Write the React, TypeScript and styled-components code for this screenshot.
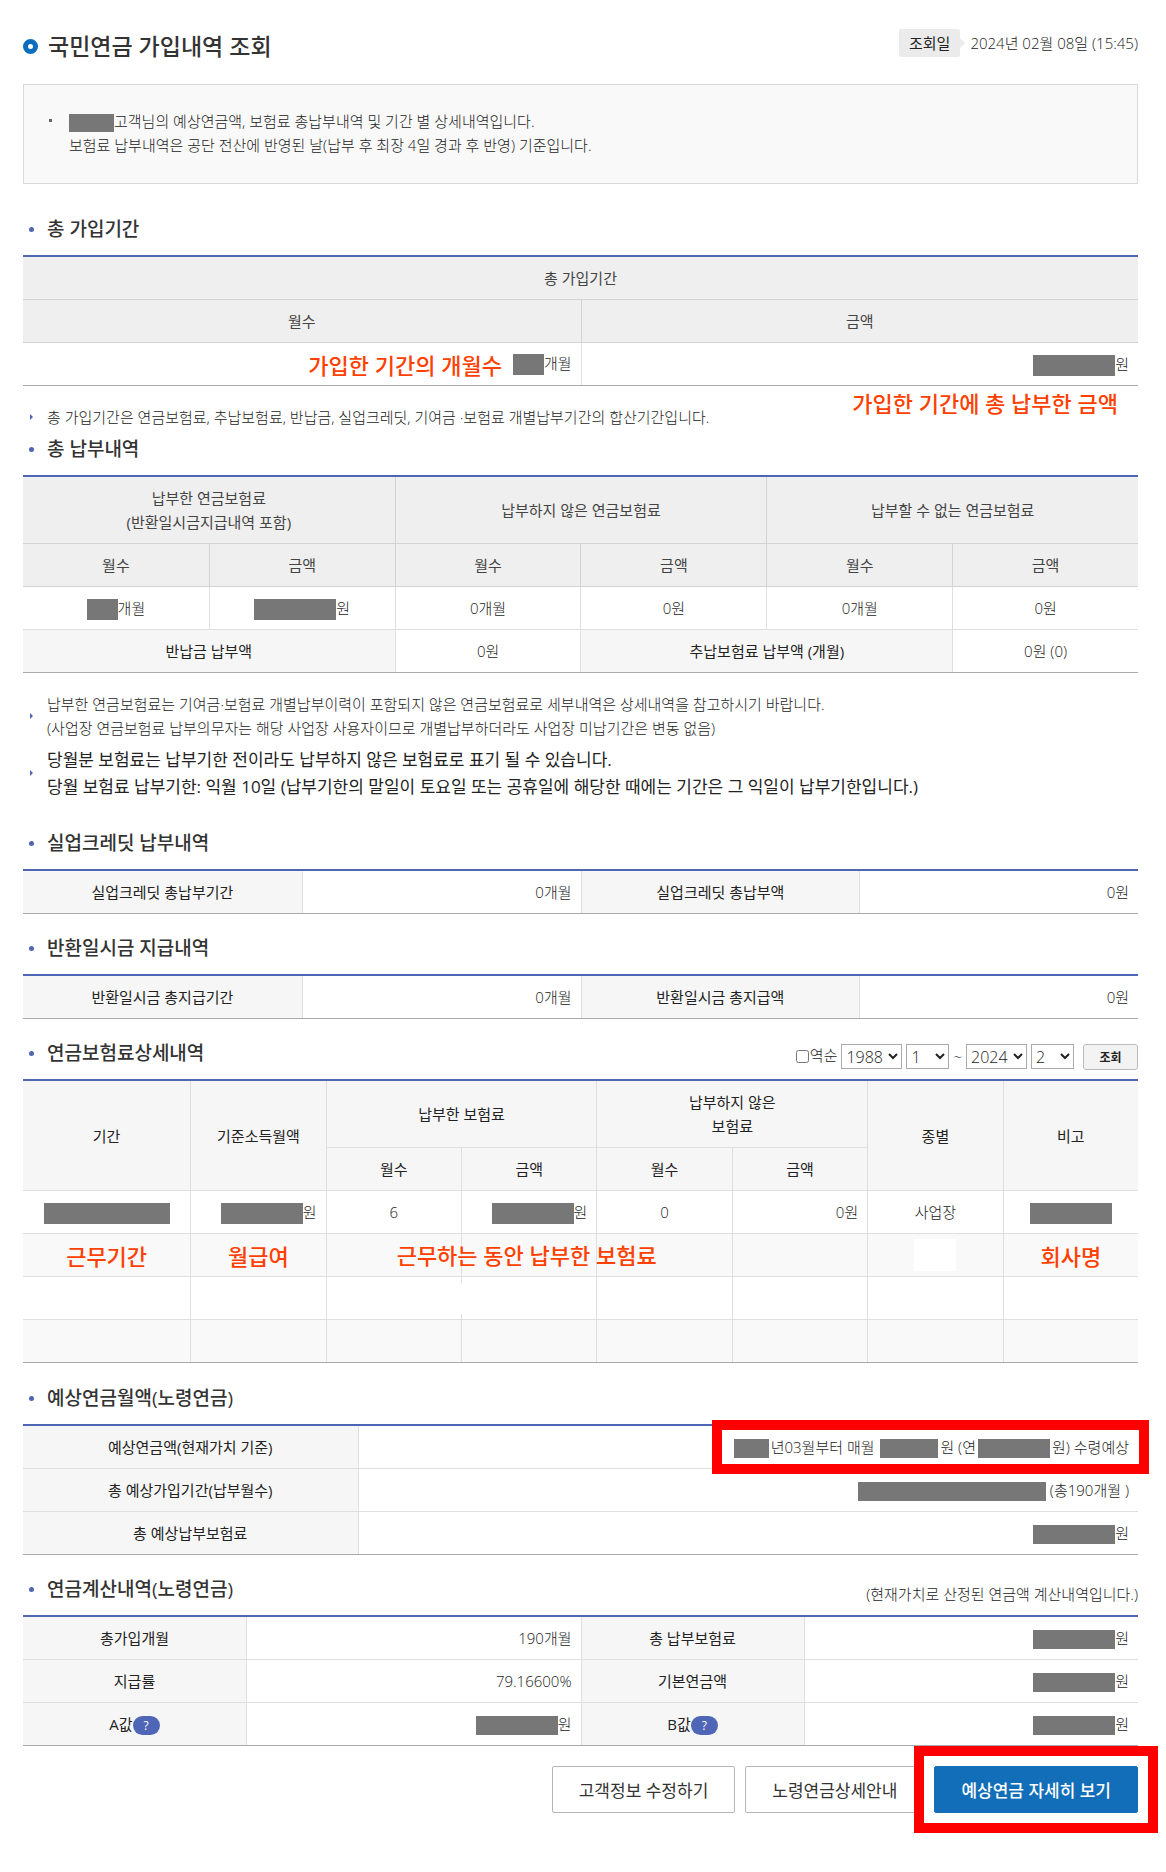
import React from 'react';
import styled, { createGlobalStyle, css } from 'styled-components';

const BLUE = '#4f65b5';

const GlobalStyle = createGlobalStyle`
  *, *::before, *::after { box-sizing: border-box; }
  body {
    margin: 0;
    background: #fff;
    color: #222;
    font-family: "Open Sans", "Noto Sans CJK KR", sans-serif;
    font-size: 15px;
    font-weight: 300;
    line-height: 24px;
    word-break: keep-all;
  }
  button, select, input { font-family: inherit; color: inherit; }
`;

const Page = styled.main`
  padding: 29px 28px 57px 23px;
`;

const Header = styled.header`
  display: flex;
  align-items: flex-start;
  justify-content: space-between;
  margin-bottom: 21px;
`;

const PageTitle = styled.h1`
  display: flex;
  align-items: center;
  gap: 10px;
  margin: 0;
  color: #333;
  font-size: 23px;
  font-weight: 500;
  line-height: 34px;
  &::before {
    content: "";
    width: 15px;
    height: 15px;
    border: 5px solid #0a6ebd;
    border-radius: 50%;
  }
`;

const QueryDate = styled.div`
  display: flex;
  align-items: center;
  gap: 10px;
  line-height: 28px;
`;

const DateLabel = styled.span`
  position: relative;
  padding: 0 10px;
  border-radius: 2px;
  background: #ebebeb;
  font-weight: 400;
  &::after {
    content: "";
    position: absolute;
    top: 9px;
    left: 100%;
    border: 5px solid transparent;
    border-left-color: #ebebeb;
    border-right-width: 0;
  }
`;

const Notice = styled.ul`
  margin: 0 0 30px;
  padding: 24px 45px 26px;
  border: 1px solid #d9d9d9;
  background: #f9f9f9;
  list-style: none;
`;

const NoticeItem = styled.li`
  position: relative;
  &::before {
    content: "";
    position: absolute;
    top: 10px;
    left: -20px;
    width: 3px;
    height: 3px;
    background: #666;
  }
`;

const SectionHead = styled.div<{ $gap?: number }>`
  display: flex;
  align-items: flex-end;
  justify-content: space-between;
  height: 32px;
  margin: ${(p) => p.$gap ?? 19}px 0 9px;
`;

const SectionTitle = styled.h2`
  display: flex;
  align-items: center;
  align-self: flex-start;
  gap: 13px;
  margin: 0;
  padding-left: 6px;
  color: #333;
  font-size: 19px;
  font-weight: 500;
  line-height: 30px;
  &::before {
    content: "";
    width: 5px;
    height: 5px;
    border-radius: 50%;
    background: ${BLUE};
  }
`;

const Table = styled.table`
  width: 100%;
  table-layout: fixed;
  border-top: 2px solid ${BLUE};
  border-bottom: 1px solid #aaa;
  border-collapse: separate;
  border-spacing: 0;
  & tr > :first-child:not([data-inner]) { border-left: 0; }
  & tbody tr:last-child > * { height: 42px; border-bottom: 0; }
`;

type Align = { $align?: 'left' | 'center' | 'right' };

const cell = css`
  position: relative;
  height: 43px;
  padding: 0 9px;
  border-left: 1px solid #dfdfdf;
  border-bottom: 1px solid #dfdfdf;
`;

const Th = styled.th<{ $tall?: boolean; $dark?: boolean }>`
  ${cell}
  ${(p) => p.$tall && 'height: 67px;'}
  ${(p) => p.$dark && 'border-color: #d3d3d3;'}
  background: ${(p) => (p.$dark ? '#efefef' : '#f6f6f6')};
  color: ${(p) => (p.$dark ? '#444' : '#222')};
  font-weight: 400;
  text-align: center;
`;

const Td = styled.td<Align>`
  ${cell}
  text-align: ${(p) => p.$align || 'center'};
`;

const Row = styled.tr<{ $striped?: boolean }>`
  background: ${(p) => (p.$striped ? '#f9f9f9' : 'transparent')};
`;

const Redacted = styled.span<{ $w: number; $h?: number }>`
  display: inline-block;
  width: ${(p) => p.$w}px;
  height: ${(p) => p.$h || 21}px;
  background: #777;
  vertical-align: middle;
`;

const Annotation = styled.span`
  color: #ff4000;
  font-size: 22px;
  font-weight: 500;
  line-height: 24px;
  white-space: nowrap;
  vertical-align: middle;
`;

const InlineAnnotation = styled(Annotation)`
  margin-right: 11px;
`;

const BelowAnnotation = styled(Annotation)`
  position: absolute;
  top: 48px;
  right: 20px;
`;

const SpanningAnnotation = styled(Annotation)`
  position: absolute;
  z-index: 1;
  top: 9px;
  left: 70px;
`;

const BlankPatch = styled.span`
  display: inline-block;
  width: 42px;
  height: 32px;
  background: #fff;
  vertical-align: middle;
`;

const BorderPatch = styled.span`
  position: absolute;
  top: 6px;
  left: -20px;
  bottom: 5px;
  width: 30px;
  background: #fff;
`;

const Notes = styled.ul`
  display: grid;
  gap: 6px;
  margin: 19px 0 0;
  padding: 0;
  list-style: none;
`;

const Note = styled.li<{ $strong?: boolean }>`
  display: flex;
  align-items: center;
  gap: 14px;
  padding-left: 7px;
  ${(p) => p.$strong && 'font-size: 17px; font-weight: 400; line-height: 27px;'}
  &::before {
    content: "";
    border: 3px solid transparent;
    border-left-color: ${BLUE};
    border-right-width: 0;
  }
`;

const Filter = styled.form`
  display: flex;
  align-items: flex-start;
  gap: 4px;
`;

const CheckLabel = styled.label`
  display: flex;
  align-items: center;
  gap: 1px;
  height: 22px;
`;

const Checkbox = styled.input`
  width: 13px;
  height: 13px;
  margin: 3px 0 0;
`;

const Select = styled.select<{ $w: number }>`
  width: ${(p) => p.$w}px;
  height: 25px;
  padding: 0;
  border: 1px solid #aaa;
  border-radius: 0;
  background-color: #fff;
  font-size: 16px;
  font-weight: 300;
`;

const SearchButton = styled.button`
  width: 55px;
  height: 26px;
  margin-left: 5px;
  padding: 0;
  border: 1px solid #bbb;
  border-radius: 3px;
  background: #f3f3f3;
  font-size: 12px;
  font-weight: 700;
`;

const HelpButton = styled.button`
  width: 27px;
  height: 19px;
  padding: 0;
  border: 0;
  border-radius: 10px;
  background: ${BLUE};
  color: #fff;
  font-size: 12px;
  line-height: 19px;
  vertical-align: middle;
`;

const Highlight = styled.span`
  position: relative;
  display: inline-block;
  & > ${Redacted} { margin: 0 2px; }
  &::after {
    content: "";
    position: absolute;
    z-index: 1;
    inset: -15px -20px;
    border: 10px solid #f00;
    pointer-events: none;
  }
`;

const Actions = styled.div`
  display: flex;
  justify-content: flex-end;
  gap: 10px;
  margin-top: 20px;
`;

const ActionButton = styled.button<{ $primary?: boolean }>`
  height: 47px;
  padding: 0 26px;
  border: 1px solid ${(p) => (p.$primary ? '#126eb8' : '#b5b5b5')};
  border-radius: 2px;
  background: ${(p) => (p.$primary ? '#126eb8' : '#fff')};
  color: ${(p) => (p.$primary ? '#fff' : '#333')};
  font-size: 17px;
  font-weight: ${(p) => (p.$primary ? 500 : 400)};
`;

const ActionFrame = styled.span`
  display: flex;
  outline: 10px solid #f00;
  outline-offset: 10px;
`;

const Months = ({ w = 31 }: { w?: number }) => (
  <><Redacted $w={w} />개월</>
);
const Won = ({ w = 82, h }: { w?: number; h?: number }) => (
  <><Redacted $w={w} $h={h} />원</>
);

const PeriodTotals = () => (
  <Table aria-label="총 가입기간">
    <thead>
      <tr><Th $dark colSpan={2}>총 가입기간</Th></tr>
      <tr><Th $dark>월수</Th><Th $dark>금액</Th></tr>
    </thead>
    <tbody>
      <tr>
        <Td $align="right">
          <InlineAnnotation>가입한 기간의 개월수</InlineAnnotation><Months />
        </Td>
        <Td $align="right">
          <Won />
          <BelowAnnotation>가입한 기간에 총 납부한 금액</BelowAnnotation>
        </Td>
      </tr>
    </tbody>
  </Table>
);

const PaymentTotals = () => (
  <Table aria-label="총 납부내역">
    <thead>
      <tr>
        <Th $dark $tall colSpan={2}>납부한 연금보험료<br />(반환일시금지급내역 포함)</Th>
        <Th $dark $tall colSpan={2}>납부하지 않은 연금보험료</Th>
        <Th $dark $tall colSpan={2}>납부할 수 없는 연금보험료</Th>
      </tr>
      <tr>
        {[0, 1, 2].map((i) => (
          <React.Fragment key={i}>
            <Th $dark>월수</Th>
            <Th $dark>금액</Th>
          </React.Fragment>
        ))}
      </tr>
    </thead>
    <tbody>
      <tr>
        <Td><Months /></Td><Td><Won /></Td>
        <Td>0개월</Td><Td>0원</Td>
        <Td>0개월</Td><Td>0원</Td>
      </tr>
      <tr>
        <Th colSpan={2}>반납금 납부액</Th>
        <Td>0원</Td>
        <Th colSpan={2}>추납보험료 납부액 (개월)</Th>
        <Td>0원 (0)</Td>
      </tr>
    </tbody>
  </Table>
);

const PairTable = ({ label, months, amount }: { label: string; months: string; amount: string }) => (
  <Table aria-label={label}>
    <tbody>
      <tr>
        <Th>{months}</Th><Td $align="right">0개월</Td>
        <Th>{amount}</Th><Td $align="right">0원</Td>
      </tr>
    </tbody>
  </Table>
);

const DetailTable = () => (
  <Table aria-label="연금보험료상세내역">
    <colgroup><col style={{ width: '15%' }} /><col span={7} /></colgroup>
    <thead>
      <tr>
        <Th rowSpan={2}>기간</Th>
        <Th rowSpan={2}>기준소득월액</Th>
        <Th $tall colSpan={2}>납부한 보험료</Th>
        <Th $tall colSpan={2}>납부하지 않은<br />보험료</Th>
        <Th rowSpan={2}>종별</Th>
        <Th rowSpan={2}>비고</Th>
      </tr>
      <tr>
        <Th data-inner="">월수</Th><Th>금액</Th><Th>월수</Th><Th>금액</Th>
      </tr>
    </thead>
    <tbody>
      <Row>
        <Td><Redacted $w={126} /></Td>
        <Td $align="right"><Won /></Td>
        <Td>6</Td>
        <Td $align="right"><Won /></Td>
        <Td>0</Td>
        <Td $align="right">0원</Td>
        <Td>사업장</Td>
        <Td><Redacted $w={82} /></Td>
      </Row>
      <Row $striped>
        <Td><Annotation>근무기간</Annotation></Td>
        <Td><Annotation>월급여</Annotation></Td>
        <Td><SpanningAnnotation>근무하는 동안 납부한 보험료</SpanningAnnotation></Td>
        <Td /><Td /><Td />
        <Td><BlankPatch /></Td>
        <Td><Annotation>회사명</Annotation></Td>
      </Row>
      <Row>
        <Td /><Td /><Td /><Td><BorderPatch /></Td><Td /><Td /><Td /><Td />
      </Row>
      <Row $striped>
        <Td /><Td /><Td /><Td /><Td /><Td /><Td /><Td />
      </Row>
    </tbody>
  </Table>
);

const EstimateTable = () => (
  <Table aria-label="예상연금월액(노령연금)">
    <colgroup><col style={{ width: '30%' }} /><col /></colgroup>
    <tbody>
      <tr>
        <Th>예상연금액(현재가치 기준)</Th>
        <Td $align="right">
          <Highlight>
            <Redacted $w={35} $h={19} />년03월부터 매월 <Won w={58} h={19} /> (연<Won w={72} h={19} />) 수령예상
          </Highlight>
        </Td>
      </tr>
      <tr>
        <Th>총 예상가입기간(납부월수)</Th>
        <Td $align="right"><Redacted $w={188} $h={19} /> (총190개월 )</Td>
      </tr>
      <tr>
        <Th>총 예상납부보험료</Th>
        <Td $align="right"><Won h={19} /></Td>
      </tr>
    </tbody>
  </Table>
);

const CalculationTable = () => (
  <Table aria-label="연금계산내역(노령연금)">
    <colgroup>
      {[20, 30, 20, 30].map((w, i) => <col key={i} style={{ width: `${w}%` }} />)}
    </colgroup>
    <tbody>
      <tr>
        <Th>총가입개월</Th><Td $align="right">190개월</Td>
        <Th>총 납부보험료</Th><Td $align="right"><Won h={19} /></Td>
      </tr>
      <tr>
        <Th>지급률</Th><Td $align="right">79.16600%</Td>
        <Th>기본연금액</Th><Td $align="right"><Won h={19} /></Td>
      </tr>
      <tr>
        <Th>A값<HelpButton type="button">?</HelpButton></Th>
        <Td $align="right"><Won h={19} /></Td>
        <Th>B값<HelpButton type="button">?</HelpButton></Th>
        <Td $align="right"><Won h={19} /></Td>
      </tr>
    </tbody>
  </Table>
);

const YearSelect = ({ label, year }: { label: string; year: number }) => (
  <Select $w={61} aria-label={label} defaultValue={year}>
    {Array.from({ length: 37 }, (_, i) => 1988 + i).map((y) => <option key={y}>{y}</option>)}
  </Select>
);

const MonthSelect = ({ label, month }: { label: string; month: number }) => (
  <Select $w={43} aria-label={label} defaultValue={month}>
    {Array.from({ length: 12 }, (_, i) => i + 1).map((m) => <option key={m}>{m}</option>)}
  </Select>
);

export default function App() {
  return (
    <Page>
      <GlobalStyle />
      <Header>
        <PageTitle>국민연금 가입내역 조회</PageTitle>
        <QueryDate>
          <DateLabel>조회일</DateLabel>
          <span>2024년 02월 08일 (15:45)</span>
        </QueryDate>
      </Header>

      <Notice>
        <NoticeItem>
          <Redacted $w={45} $h={18} />고객님의 예상연금액, 보험료 총납부내역 및 기간 별 상세내역입니다.<br />
          보험료 납부내역은 공단 전산에 반영된 날(납부 후 최장 4일 경과 후 반영) 기준입니다.
        </NoticeItem>
      </Notice>

      <SectionHead><SectionTitle>총 가입기간</SectionTitle></SectionHead>
      <PeriodTotals />
      <Notes>
        <Note>총 가입기간은 연금보험료, 추납보험료, 반납금, 실업크레딧, 기여금 ·보험료 개별납부기간의 합산기간입니다.</Note>
      </Notes>

      <SectionHead $gap={5}><SectionTitle>총 납부내역</SectionTitle></SectionHead>
      <PaymentTotals />
      <Notes>
        <Note>
          <span>
            납부한 연금보험료는 기여금·보험료 개별납부이력이 포함되지 않은 연금보험료로 세부내역은 상세내역을 참고하시기 바랍니다.<br />
            (사업장 연금보험료 납부의무자는 해당 사업장 사용자이므로 개별납부하더라도 사업장 미납기간은 변동 없음)
          </span>
        </Note>
        <Note $strong>
          <span>
            당월분 보험료는 납부기한 전이라도 납부하지 않은 보험료로 표기 될 수 있습니다.<br />
            당월 보험료 납부기한: 익월 10일 (납부기한의 말일이 토요일 또는 공휴일에 해당한 때에는 기간은 그 익일이 납부기한입니다.)
          </span>
        </Note>
      </Notes>

      <SectionHead $gap={28}><SectionTitle>실업크레딧 납부내역</SectionTitle></SectionHead>
      <PairTable label="실업크레딧 납부내역" months="실업크레딧 총납부기간" amount="실업크레딧 총납부액" />

      <SectionHead><SectionTitle>반환일시금 지급내역</SectionTitle></SectionHead>
      <PairTable label="반환일시금 지급내역" months="반환일시금 총지급기간" amount="반환일시금 총지급액" />

      <SectionHead>
        <SectionTitle>연금보험료상세내역</SectionTitle>
        <Filter>
          <CheckLabel><Checkbox type="checkbox" />역순</CheckLabel>
          <YearSelect label="시작 연도" year={1988} />
          <MonthSelect label="시작 월" month={1} />
          <span>~</span>
          <YearSelect label="종료 연도" year={2024} />
          <MonthSelect label="종료 월" month={2} />
          <SearchButton type="button">조회</SearchButton>
        </Filter>
      </SectionHead>
      <DetailTable />

      <SectionHead $gap={20}><SectionTitle>예상연금월액(노령연금)</SectionTitle></SectionHead>
      <EstimateTable />

      <SectionHead>
        <SectionTitle>연금계산내역(노령연금)</SectionTitle>
        <span>(현재가치로 산정된 연금액 계산내역입니다.)</span>
      </SectionHead>
      <CalculationTable />

      <Actions>
        <ActionButton type="button">고객정보 수정하기</ActionButton>
        <ActionButton type="button">노령연금상세안내</ActionButton>
        <ActionFrame>
          <ActionButton type="button" $primary>예상연금 자세히 보기</ActionButton>
        </ActionFrame>
      </Actions>
    </Page>
  );
}
